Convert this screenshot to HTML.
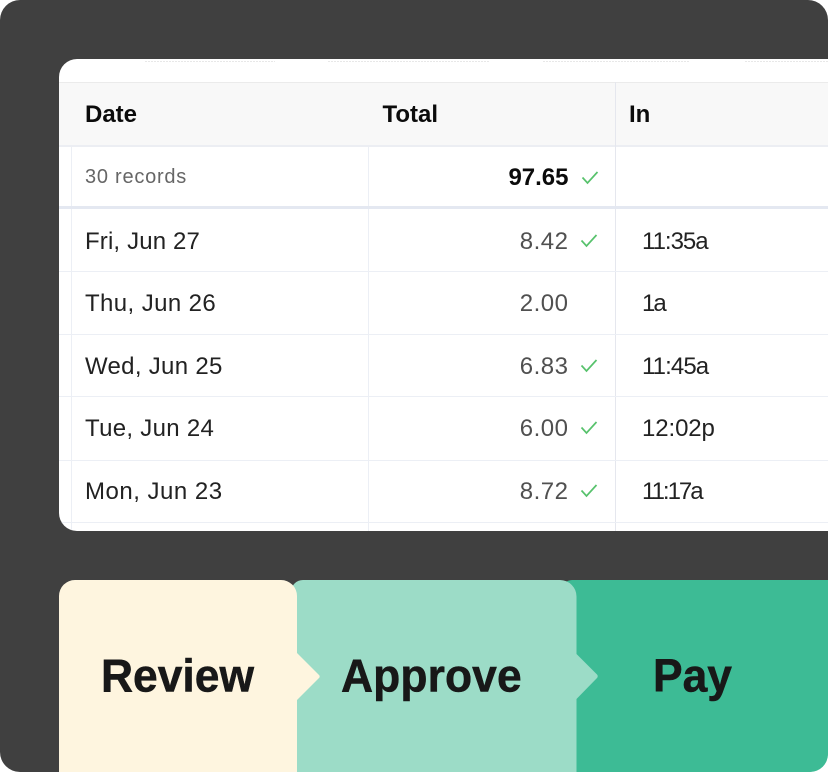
<!DOCTYPE html>
<html>
<head>
<meta charset="utf-8">
<style>
html,body{margin:0;padding:0;background:#fff;}
#s{position:relative;width:828px;height:772px;overflow:hidden;background:#fff;font-family:"Liberation Sans",sans-serif;}
#bg{position:absolute;left:0;top:0;width:828px;height:772px;background:#404040;border-radius:20px;}
#card{position:absolute;left:59px;top:59px;width:769px;height:472px;background:#fff;border-radius:18px 0 0 18px;overflow:hidden;}
#s svg{position:absolute;left:0;top:0;}
.t{position:absolute;white-space:nowrap;line-height:30px;height:30px;}
.h{font-weight:700;font-size:24px;color:#0b0b0b;}
.d{font-size:24px;color:#222;}
.n{font-size:24px;color:#505050;text-align:right;width:100px;left:468.500px;letter-spacing:.5px;}
.big{font-weight:700;font-size:44.4px;color:#181818;line-height:50px;height:50px;-webkit-text-stroke:.5px #181818;transform:scaleY(1.05);transform-origin:0 100%;}
</style>
</head>
<body>
<div id="s">
<div id="bg"></div>
<div id="card"></div>
<svg width="828" height="772" viewBox="0 0 828 772">
  <defs>
    <clipPath id="c"><path d="M77 59H828V531H77A18 18 0 0 1 59 513V77A18 18 0 0 1 77 59Z"/></clipPath>
  </defs>
  <g clip-path="url(#c)">
    <!-- dotted top traces -->
    <g fill="none" stroke="#e8e8e8" stroke-width="1" stroke-dasharray="2 1">
      <path d="M145 61.500H275"/>
      <path d="M328 61.500H490"/>
      <path d="M543 61.500H690"/>
      <path d="M745 61.500H828"/>
    </g>
    <!-- header -->
    <rect x="59" y="82" width="769" height="64" fill="#f8f8f8"/>
    <rect x="59" y="82" width="769" height="1" fill="#ebebeb"/>
    <rect x="59" y="145" width="769" height="2" fill="#eceef3"/>
    <!-- verticals -->
    <rect x="71" y="147" width="1" height="384" fill="#eceff5"/>
    <rect x="368" y="147" width="1" height="384" fill="#eceff5"/>
    <rect x="615" y="82" width="1" height="449" fill="#e5e7ee"/>
    <!-- horizontals -->
    <rect x="59" y="206" width="769" height="3" fill="#e4e8f1"/>
    <rect x="59" y="271" width="769" height="1" fill="#eceff5"/>
    <rect x="59" y="334" width="769" height="1" fill="#eceff5"/>
    <rect x="59" y="396" width="769" height="1" fill="#eceff5"/>
    <rect x="59" y="460" width="769" height="1" fill="#eceff5"/>
    <rect x="59" y="522" width="769" height="1" fill="#eceff5"/>
  </g>
  <!-- checks -->
  <g fill="none" stroke="#57c26c" stroke-width="1.7">
    <path d="M582.500 177.500l5 5.500 10-11"/>
    <path d="M581.500 240.500l5 5.500 10-11"/>
    <path d="M581.500 365.500l5 5.500 10-11"/>
    <path d="M581.500 427.500l5 5.500 10-11"/>
    <path d="M581.500 490.500l5 5.500 10-11"/>
  </g>
  <!-- panels -->
  <path d="M562 590a10 10 0 0 1 10-10H828V754a18 18 0 0 1-18 18H562Z" fill="#3dbb95"/>
  <path d="M291 592a12 12 0 0 1 12-12H560a16.500 16.500 0 0 1 16.500 16.500V654l20.500 20.500a2.500 2.500 0 0 1 0 3.500L576.500 699V772H291Z" fill="#9cdcc7"/>
  <path d="M59 772V596a16 16 0 0 1 16-16H281a16 16 0 0 1 16 16V653l22 22a2 2 0 0 1 0 3L297 700V772Z" fill="#fef5df"/>
</svg>

<div class="t h" style="left:85px;top:100px;">Date</div>
<div class="t h" style="left:382.500px;top:100px;">Total</div>
<div class="t h" style="left:629px;top:100px;">In</div>

<div class="t" style="left:85px;top:162px;font-size:20px;color:#666;letter-spacing:.75px;">30 records</div>
<div class="t n" style="top:163px;font-weight:700;color:#0b0b0b;letter-spacing:0;">97.65</div>

<div class="t d" style="left:85px;top:227px;letter-spacing:.15px;">Fri, Jun 27</div>
<div class="t n" style="top:227px;">8.42</div>
<div class="t d" style="left:642px;top:227px;letter-spacing:-1px;">11:35a</div>

<div class="t d" style="left:85px;top:289px;letter-spacing:.4px;">Thu, Jun 26</div>
<div class="t n" style="top:289px;">2.00</div>
<div class="t d" style="left:642px;top:289px;letter-spacing:-2px;">1a</div>

<div class="t d" style="left:85px;top:352px;letter-spacing:.3px;">Wed, Jun 25</div>
<div class="t n" style="top:352px;">6.83</div>
<div class="t d" style="left:642px;top:352px;letter-spacing:-.9px;">11:45a</div>

<div class="t d" style="left:85px;top:414px;letter-spacing:.3px;">Tue, Jun 24</div>
<div class="t n" style="top:414px;">6.00</div>
<div class="t d" style="left:642px;top:414px;letter-spacing:-.1px;">12:02p</div>

<div class="t d" style="left:85px;top:477px;letter-spacing:.5px;">Mon, Jun 23</div>
<div class="t n" style="top:477px;">8.72</div>
<div class="t d" style="left:642px;top:477px;letter-spacing:-2px;">11:17a</div>

<div class="t big" style="left:101px;top:653px;">Review</div>
<div class="t big" style="left:341px;top:653px;letter-spacing:.1px;">Approve</div>
<div class="t big" style="left:653px;top:653px;">Pay</div>
</div>
</body>
</html>
